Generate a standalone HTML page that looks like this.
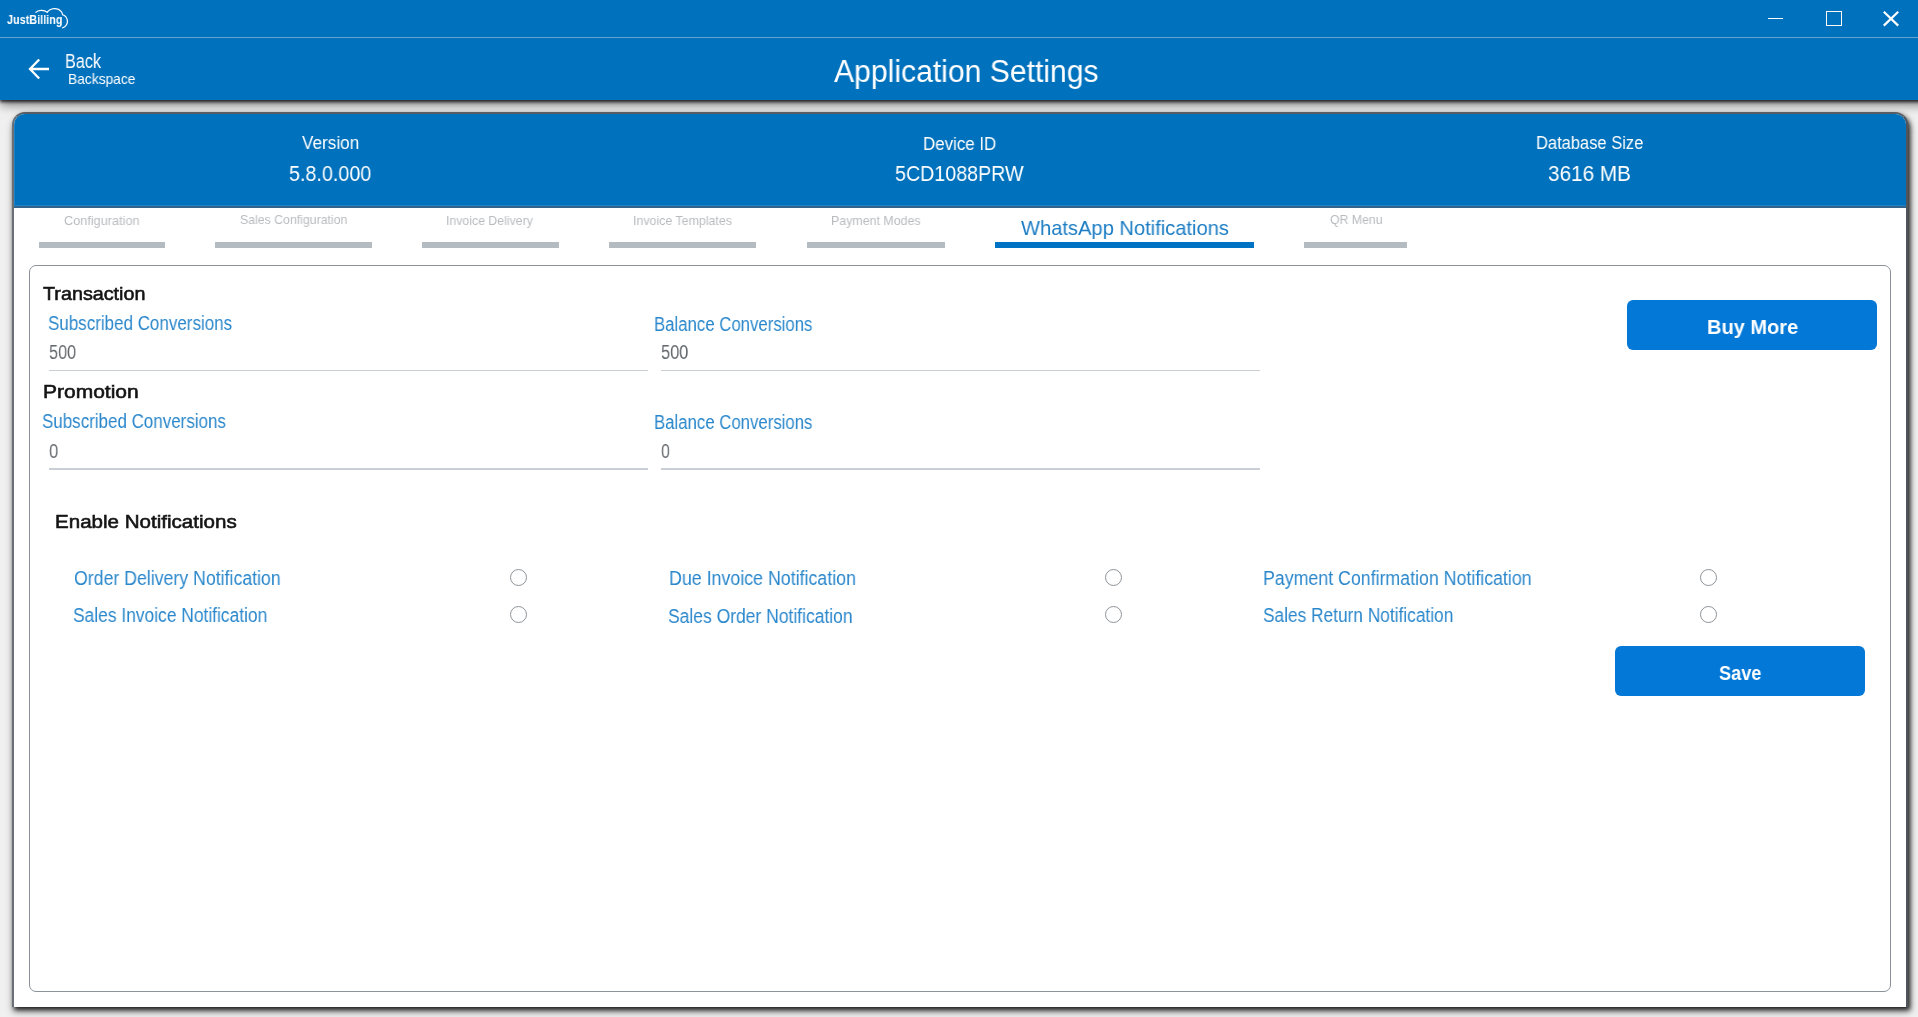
<!DOCTYPE html>
<html><head><meta charset="utf-8"><title>Application Settings</title><style>
*{box-sizing:border-box;margin:0;padding:0}
html,body{width:1918px;height:1017px;overflow:hidden}
body{background:#f0f0f0;font-family:"Liberation Sans",sans-serif;position:relative}
.t{position:absolute;white-space:nowrap;line-height:1;transform-origin:0 0;will-change:transform}
.a{position:absolute}
.bar{position:absolute;top:241.5px;height:6px;background:#b4bbc1}
.ul{position:absolute;height:1.5px;background:#c9cfd5}
.btn{position:absolute;width:250px;height:50px;background:#0378d7;border-radius:6px}
.radio{position:absolute;width:17px;height:17px;border:1.9px solid #8e9398;border-radius:50%}
</style></head><body>
<div class="a" style="left:0;top:0;width:1950px;height:100px;background:#0071bc;box-shadow:0 2px 3px rgba(0,0,0,0.75),0 4px 11px rgba(0,0,0,0.55)"></div>
<div class="a" style="left:0;top:37px;width:1918px;height:1px;background:#66a4cf"></div>
<div class="a" style="left:12px;top:112.3px;width:1896px;height:895.1px;background:#fff;border:2px solid #575d63;border-left-color:#6a7076;border-right-color:#4f555b;border-bottom:0;border-radius:13px 13px 0 0;box-shadow:2px 3px 5px rgba(0,0,0,0.85),1.5px 5px 8px rgba(0,0,0,0.3);overflow:hidden"><div class="a" style="left:0;top:0;width:100%;height:94px;background:#0071bc;border-bottom:2px solid #33648b;box-shadow:inset 1px -1px 0 rgba(255,255,255,0.12)"></div></div>
<div class="a" style="left:1768px;top:18px;width:15px;height:1px;background:#fff"></div>
<div class="a" style="left:1826px;top:11px;width:16px;height:15.3px;border:1.9px solid #fbf8f5"></div>
<svg class="a" style="left:1882px;top:10px" width="18" height="18" viewBox="0 0 18 18"><path d="M1.8 1.8 L16.2 15.6 M16.2 1.8 L1.8 15.6" stroke="#fff" stroke-width="2.2" fill="none"/></svg>
<svg class="a" style="left:0;top:0" width="80" height="37" viewBox="0 0 80 37"><path d="M35.5 12.6 C38 10 44 9.6 47.2 12.3 C50 8 57.5 6.8 61.5 11.8 C62.2 13 62.5 13.8 62.6 14.8 C67.8 16.5 69 23 65 26.5 C64 27.3 63 27.8 62 28" stroke="#fff" stroke-width="1.2" fill="none"/></svg>
<svg class="a" style="left:28px;top:58px" width="22" height="22" viewBox="0 0 22 22"><path d="M11.2 1.5 L2 11 L11.2 20.5 M2 11 H21" stroke="#fff" stroke-width="2.3" fill="none"/></svg>
<div class="bar" style="left:38.8px;width:125.8px"></div>
<div class="bar" style="left:215px;width:157px"></div>
<div class="bar" style="left:422px;width:136.5px"></div>
<div class="bar" style="left:608.6px;width:147.79999999999995px"></div>
<div class="bar" style="left:806.7px;width:138.69999999999993px"></div>
<div class="bar" style="left:1304.4px;width:102.19999999999982px"></div>
<div class="bar" style="left:995.3px;width:259.1px;background:#0072c4"></div>
<div class="a" style="left:28.6px;top:265.3px;width:1862.5px;height:726.6px;border:1.9px solid #8b9299;border-radius:7px"></div>
<div class="ul" style="left:48.7px;top:369.5px;width:599.3px"></div>
<div class="ul" style="left:660.6px;top:369.5px;width:599.4px"></div>
<div class="ul" style="left:48.7px;top:468px;width:599.3px"></div>
<div class="ul" style="left:660.6px;top:468px;width:599.4px"></div>
<div class="btn" style="left:1627.4px;top:299.8px"></div>
<div class="btn" style="left:1615px;top:646px"></div>
<div class="radio" style="left:510.3px;top:568.6px"></div>
<div class="radio" style="left:510.3px;top:606.3px"></div>
<div class="radio" style="left:1105.4px;top:568.6px"></div>
<div class="radio" style="left:1105.4px;top:606.3px"></div>
<div class="radio" style="left:1700.4px;top:568.6px"></div>
<div class="radio" style="left:1700.4px;top:606.3px"></div>
<div class="t" style="left:7.0px;top:14.05px;font-size:12.7px;font-weight:bold;color:#fff;transform:scaleX(0.8564)">JustBilling</div>
<div class="t" style="left:65.0px;top:51.9px;font-size:19.5px;color:#fff;transform:scaleX(0.8333)">Back</div>
<div class="t" style="left:67.5px;top:72.45px;font-size:14.6px;color:#fff;transform:scaleX(0.9443)">Backspace</div>
<div class="t" style="left:834.0px;top:56.65px;font-size:30.8px;color:#fff;transform:scaleX(0.9782)">Application Settings</div>
<div class="t" style="left:301.7px;top:134.45px;font-size:18.7px;color:#fff;transform:scaleX(0.9178)">Version</div>
<div class="t" style="left:288.6px;top:163.47px;font-size:22.3px;color:#fff;transform:scaleX(0.8849)">5.8.0.000</div>
<div class="t" style="left:923.2px;top:134.6px;font-size:18.7px;color:#fff;transform:scaleX(0.9038)">Device ID</div>
<div class="t" style="left:895.25px;top:163.47px;font-size:22.3px;color:#fff;transform:scaleX(0.8817)">5CD1088PRW</div>
<div class="t" style="left:1536.1px;top:134.1px;font-size:18.7px;color:#fff;transform:scaleX(0.8825)">Database Size</div>
<div class="t" style="left:1548.2px;top:163.47px;font-size:22.3px;color:#fff;transform:scaleX(0.9299)">3616 MB</div>
<div class="t" style="left:64.0px;top:215.25px;font-size:12.8px;color:#b9bcbf;transform:scaleX(0.9921)">Configuration</div>
<div class="t" style="left:239.8px;top:214.25px;font-size:12.8px;color:#b9bcbf;transform:scaleX(0.9613)">Sales Configuration</div>
<div class="t" style="left:446.2px;top:215.2px;font-size:12.8px;color:#b9bcbf;transform:scaleX(0.9611)">Invoice Delivery</div>
<div class="t" style="left:632.9px;top:215.2px;font-size:12.8px;color:#b9bcbf;transform:scaleX(0.9683)">Invoice Templates</div>
<div class="t" style="left:830.8px;top:215.2px;font-size:12.8px;color:#b9bcbf;transform:scaleX(0.9693)">Payment Modes</div>
<div class="t" style="left:1020.8px;top:217.6px;font-size:20.8px;color:#1a7cc3;transform:scaleX(0.9674)">WhatsApp Notifications</div>
<div class="t" style="left:1329.5px;top:214.25px;font-size:12.8px;color:#b9bcbf;transform:scaleX(0.9584)">QR Menu</div>
<div class="t" style="left:43.1px;top:284.07px;font-size:19.2px;-webkit-text-stroke:0.6px #141414;color:#141414;transform:scaleX(1.0293)">Transaction</div>
<div class="t" style="left:48.0px;top:314.05px;font-size:19.6px;color:#2a87cb;transform:scaleX(0.8668)">Subscribed Conversions</div>
<div class="t" style="left:49.4px;top:342.8px;font-size:19.6px;color:#63686d;transform:scaleX(0.828)">500</div>
<div class="t" style="left:654.1px;top:314.5px;font-size:19.6px;color:#2a87cb;transform:scaleX(0.8555)">Balance Conversions</div>
<div class="t" style="left:660.9px;top:342.95px;font-size:19.6px;color:#63686d;transform:scaleX(0.8352)">500</div>
<div class="t" style="left:42.5px;top:381.75px;font-size:19.2px;-webkit-text-stroke:0.6px #141414;color:#141414;transform:scaleX(1.0942)">Promotion</div>
<div class="t" style="left:42.1px;top:412.15px;font-size:19.6px;color:#2a87cb;transform:scaleX(0.8659)">Subscribed Conversions</div>
<div class="t" style="left:49.0px;top:442.0px;font-size:19.6px;color:#63686d;transform:scaleX(0.8458)">0</div>
<div class="t" style="left:654.1px;top:412.85px;font-size:19.6px;color:#2a87cb;transform:scaleX(0.8555)">Balance Conversions</div>
<div class="t" style="left:660.6px;top:441.9px;font-size:19.6px;color:#63686d;transform:scaleX(0.8182)">0</div>
<div class="t" style="left:1707.0px;top:315.75px;font-size:21px;font-weight:bold;color:#fff;transform:scaleX(0.9533)">Buy More</div>
<div class="t" style="left:55.1px;top:511.65px;font-size:19.2px;-webkit-text-stroke:0.6px #141414;color:#141414;transform:scaleX(1.0716)">Enable Notifications</div>
<div class="t" style="left:74.1px;top:569.15px;font-size:19.6px;color:#2a87cb;transform:scaleX(0.904)">Order Delivery Notification</div>
<div class="t" style="left:668.6px;top:569.2px;font-size:19.6px;color:#2a87cb;transform:scaleX(0.9083)">Due Invoice Notification</div>
<div class="t" style="left:1263.4px;top:569.45px;font-size:19.6px;color:#2a87cb;transform:scaleX(0.9068)">Payment Confirmation Notification</div>
<div class="t" style="left:73.1px;top:606.05px;font-size:19.6px;color:#2a87cb;transform:scaleX(0.8876)">Sales Invoice Notification</div>
<div class="t" style="left:668.2px;top:606.6px;font-size:19.6px;color:#2a87cb;transform:scaleX(0.8922)">Sales Order Notification</div>
<div class="t" style="left:1263.4px;top:606.25px;font-size:19.6px;color:#2a87cb;transform:scaleX(0.8827)">Sales Return Notification</div>
<div class="t" style="left:1718.6px;top:661.75px;font-size:21px;font-weight:bold;color:#fff;transform:scaleX(0.8654)">Save</div>
</body></html>
